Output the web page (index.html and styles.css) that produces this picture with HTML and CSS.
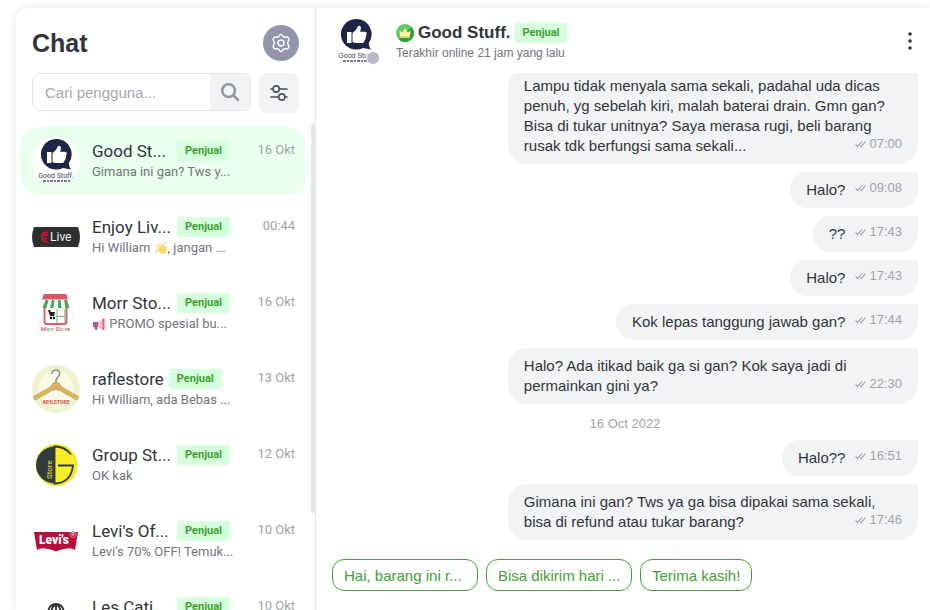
FILE: index.html
```
<!DOCTYPE html>
<html lang="id">
<head>
    <meta charset="UTF-8">
    <meta name="viewport" content="width=device-width, initial-scale=1.0">
    <title>Chat</title>
    <link rel="stylesheet" href="styles.css">
</head>
<body>
    <div class="app">
        <aside class="sidebar">
            <div class="sidebar-head">
                <h1>Chat</h1>
                <button class="settings-btn" type="button" aria-label="Pengaturan">
                    <svg width="20" height="20" viewBox="0 0 20 20" fill="none" stroke="#fff" stroke-width="1.4" stroke-linejoin="round">
                        <path d="M8.5 2.6 Q10 .2 11.5 2.6 Q12.4 4.4 14.3 4.2 Q17.2 3.6 17.9 5.9 Q18.3 7 17.2 8.2 Q16 10 17.2 11.8 Q18.5 13.2 17.6 14.6 Q16.6 16.4 14.3 15.8 Q12.4 15.6 11.5 17.4 Q10 19.8 8.5 17.4 Q7.6 15.6 5.7 15.8 Q3.4 16.4 2.4 14.6 Q1.5 13.2 2.8 11.8 Q4 10 2.8 8.2 Q1.5 6.8 2.4 5.4 Q3.4 3.6 5.7 4.2 Q7.6 4.4 8.5 2.6Z"/>
                        <circle cx="10" cy="10" r="3"/>
                    </svg>
                </button>
            </div>

            <form class="search-row">
                <div class="search-box">
                    <input type="text" placeholder="Cari pengguna..." aria-label="Cari pengguna">
                    <button class="search-btn" type="button" aria-label="Cari">
                        <svg width="20" height="20" viewBox="0 0 20 20" fill="none" stroke="#9299a3" stroke-width="2.6" stroke-linecap="round">
                            <circle cx="8.6" cy="8.6" r="6.4"/>
                            <path d="M13.5 13.5L18 18"/>
                        </svg>
                    </button>
                </div>
                <button class="filter-btn" type="button" aria-label="Filter">
                    <svg width="20" height="20" viewBox="0 0 20 20" fill="none" stroke="#4c535c" stroke-width="1.6" stroke-linecap="round">
                        <path d="M1.8 6H4M10.5 6H18M1.8 14H9.5M16 14H18"/>
                        <circle cx="7.2" cy="6" r="3.1"/>
                        <circle cx="12.8" cy="14" r="3.1"/>
                    </svg>
                </button>
            </form>

            <div class="list-wrap">
                <ul class="chat-list">
                    <li class="chat-item active">
                        <svg class="avatar" viewBox="0 0 48 48">
                            <circle cx="24" cy="24" r="24" fill="#fff"/>
                            <path d="M24 2a15.3 15.3 0 1 0 7 29l8 1.6q-2-2-2.2-6.6A15.3 15.3 0 0 0 24 2z" fill="#1e2547"/>
                            <path d="M15 15h4.5v11H15zM20.5 16q4-2.5 5.5-7 2.5-1 3 1.5l-.8 4.2h4.6q2 0 2 2-.2 1.5-1 2 .8 1.5-.4 2.7.3 1.5-1 2.4 0 2-1.8 2.2h-7q-2 0-3.1-1.2z" fill="#fff"/>
                            <text class="logo-name" x="24" y="41" text-anchor="middle" fill="#3d4260">Good Stuff.</text>
                            <path d="M11 44h27" stroke="#4a4f69" stroke-width="1.5" stroke-dasharray="3 1 2 1"/>
                        </svg>
                        <div class="chat-body">
                            <div class="chat-title"><span class="name cut">Good St...</span><span class="tag">Penjual</span></div>
                            <p>Gimana ini gan? Tws y...</p>
                        </div>
                        <time>16 Okt</time>
                    </li>
                    <li class="chat-item">
                        <svg class="avatar" viewBox="0 0 48 48">
                            <path d="M2 14h44q4 10 0 20H2q-4-10 0-20z" fill="#2e2f30"/>
                            <path d="M16 19.5q-6-1-6 4.5t6 4.5M16 22h-5M15 25.5h-4" fill="none" stroke="#c4152f" stroke-width="1.8"/>
                            <text class="logo-live" x="18" y="28" fill="#f0f0f0">Live</text>
                        </svg>
                        <div class="chat-body">
                            <div class="chat-title"><span class="name cut">Enjoy Liv...</span><span class="tag">Penjual</span></div>
                            <p>Hi William
                                <svg class="emoji" viewBox="0 0 14 14">
                                    <path d="M4.5 8L3 5q.5-1.2 1.5-.3l1.5 2L4.6 3.2q.8-1.3 1.7 0L8 6 7.2 2.2q1-1 1.7.3l1 3.8.9-2q1.5-.3 1.4 1.3l.4 4Q12.4 13 9 13q-2.5 0-4-2L2.6 8.500q.2-1.300 1.900-.5z" fill="#fcd667"/>
                                    <path d="M1.500 4.500l1-1.700M1.500 9.500l1.500 2.500M10 1.200l1.800 1" stroke="#9cbbe0" fill="none"/>
                                </svg>, jangan ...</p>
                        </div>
                        <time>00:44</time>
                    </li>
                    <li class="chat-item">
                        <svg class="avatar" viewBox="0 0 48 48">
                            <path d="M12.500 18v15q0 2 2 2h18q2 0 2-2V18" fill="#fffafa" stroke="#d9596a" stroke-width="1.8"/>
                            <path d="M13 5h20q2 0 2 2l1 5H10l1-5q0-2 2-2z" fill="#d9596a"/>
                            <path d="M10.500 10.500h25l2 7q-2 3-4.800 0-2.500 3-4.800 0-2.500 3-4.900 0-2.500 3-4.700 0-2.500 3-4.800 0-2.500 3-4.500 0z" fill="#fff"/>
                            <path d="M13.500 11h3l-2 8h-4zM20 11h2.500l-1 8H18zM26 11h2.500l1 8H26zM32 11h3l2.500 8h-4z" fill="#49a556"/>
                            <path d="M25 20v14M25 27.500h8M33 20v14" stroke="#6fb878" fill="none"/>
                            <path d="M16 21h2l1 2h4l-1 4h-4z" fill="#222"/><circle cx="19" cy="29" r="1.2"/><circle cx="22" cy="29" r="1.2"/>
                            <text class="logo-morr" x="9" y="42"><tspan fill="#df6675">M</tspan><tspan fill="#62a7d8">o</tspan><tspan fill="#edb94b">r</tspan><tspan fill="#65b876">r</tspan> <tspan fill="#df6675">S</tspan><tspan fill="#62a7d8">t</tspan><tspan fill="#edb94b">o</tspan><tspan fill="#65b876">r</tspan><tspan fill="#df6675">e</tspan></text>
                        </svg>
                        <div class="chat-body">
                            <div class="chat-title"><span class="name cut">Morr Sto...</span><span class="tag">Penjual</span></div>
                            <p><svg class="emoji" viewBox="0 0 14 14">
                                    <path d="M1 5h5v5H1z" fill="#b95491"/>
                                    <path d="M2.500 10H5l.5 2.500H3z" fill="#8c4b83"/>
                                    <path d="M6 5l5-3v11l-5-3z" fill="#f0bfcc"/>
                                    <path d="M10.500 1.500h2v11.500h-2z" fill="#ec6170"/>
                                </svg> PROMO spesial bu...</p>
                        </div>
                        <time>16 Okt</time>
                    </li>
                    <li class="chat-item">
                        <svg class="avatar" viewBox="0 0 48 48">
                            <circle cx="24" cy="24" r="24" fill="#f0f2d0"/>
                            <circle cx="24" cy="24" r="18" fill="#fafae7"/>
                            <path d="M20 9q0-4 4-4t3.500 4q0 2-2 3.500T24 18" fill="none" stroke="#83908b" stroke-width="1.5"/>
                            <path d="M21 18h6q1 3 5 5.500L46 31q1 2-1 4.200L29 26q-5-3-10 0L3 35.200Q1 33 2 31l14-7.500q4-2.500 5-5.500z" fill="#ddb35c" stroke="#b78b40" stroke-width=".6"/>
                            <text class="logo-rafle" x="24" y="39" text-anchor="middle" fill="#cf5145">AR'ILSTORE</text>
                        </svg>
                        <div class="chat-body">
                            <div class="chat-title"><span class="name">raflestore</span><span class="tag">Penjual</span></div>
                            <p>Hi William, ada Bebas ...</p>
                        </div>
                        <time>13 Okt</time>
                    </li>
                    <li class="chat-item">
                        <svg class="avatar" viewBox="0 0 48 48">
                            <circle cx="24.5" cy="24" r="21" fill="#ece92b"/>
                            <circle cx="24.5" cy="24" r="18.5" fill="#f9ee25"/>
                            <path d="M22.500 5.500a18.500 18.500 0 0 0 0 37z" fill="#333b3d"/>
                            <path d="M39 13.500Q33 5.500 22.500 5.500v37Q39 42 41 24.500H26" fill="none" stroke="#333b3d" stroke-width="1.9"/>
                            <text class="logo-group" transform="translate(20 38) rotate(-90)" fill="#e8e33c">Store</text>
                        </svg>
                        <div class="chat-body">
                            <div class="chat-title"><span class="name cut">Group St...</span><span class="tag">Penjual</span></div>
                            <p>OK kak</p>
                        </div>
                        <time>12 Okt</time>
                    </li>
                    <li class="chat-item">
                        <svg class="avatar" viewBox="0 0 48 48">
                            <path d="M2 15h44l-3 18q-4-2.500-8-1.500-6 .5-11 3-5-2.500-11-3-4-1-8 1.500z" fill="#b5103a"/>
                            <text class="logo-levis" x="22" y="27" text-anchor="middle" fill="#fff">Levi's</text>
                            <circle cx="41" cy="17.5" r="3" fill="#b5103a" stroke="#e8a9b8" stroke-width=".7"/>
                            <text class="logo-reg" x="41" y="19.3" text-anchor="middle" fill="#fff">R</text>
                        </svg>
                        <div class="chat-body">
                            <div class="chat-title"><span class="name cut">Levi's Of...</span><span class="tag">Penjual</span></div>
                            <p>Levi's 70% OFF! Temuk...</p>
                        </div>
                        <time>10 Okt</time>
                    </li>
                    <li class="chat-item">
                        <svg class="avatar" viewBox="0 0 48 48" fill="none" stroke="#333" stroke-width="1.8">
                            <path d="M16 20q1-9 8-9t8 9M20 20q-1-6 3-8M28 20q1-6-3-8M24 11v16"/>
                        </svg>
                        <div class="chat-body">
                            <div class="chat-title"><span class="name cut">Les Cati...</span><span class="tag">Penjual</span></div>
                        </div>
                        <time>10 Okt</time>
                    </li>
                </ul>
                <div class="scroll-thumb"></div>
            </div>
        </aside>

        <main class="room">
            <header class="room-head">
                <div class="room-avatar">
                    <svg class="avatar" viewBox="0 0 48 48">
                        <path d="M24 2a15.3 15.3 0 1 0 7 29l8 1.6q-2-2-2.2-6.6A15.3 15.3 0 0 0 24 2z" fill="#1e2547"/>
                        <path d="M15 15h4.5v11H15zM20.5 16q4-2.5 5.5-7 2.5-1 3 1.5l-.8 4.2h4.6q2 0 2 2-.2 1.5-1 2 .8 1.5-.4 2.7.3 1.5-1 2.4 0 2-1.8 2.2h-7q-2 0-3.1-1.2z" fill="#fff"/>
                        <text class="logo-name" x="24" y="41" text-anchor="middle" fill="#3d4260">Good Stuff.</text>
                        <path d="M11 44h27" stroke="#4a4f69" stroke-width="1.5" stroke-dasharray="3 1 2 1"/>
                    </svg>
                    <span class="status"></span>
                </div>
                <div class="room-info">
                    <div class="room-title">
                        <svg width="18" height="18" viewBox="0 0 18 18">
                            <circle cx="9" cy="9" r="9" fill="#5fc95b"/>
                            <path d="M18 9a9 9 0 0 1-15 6.7L15.5 3A9 9 0 0 1 18 9z" fill="#27a03c"/>
                            <path d="M3.2 6.5l3 2L9 4l2.8 4.5 3-2-1.3 7h-9z" fill="#fff2a6"/>
                            <path d="M4.3 12h9.4l-.3 1.7H4.6z" fill="#f2d667"/>
                        </svg>
                        <h2>Good Stuff.</h2>
                        <span class="tag">Penjual</span>
                    </div>
                    <p>Terakhir online 21 jam yang lalu</p>
                </div>
                <button class="more-btn" type="button" aria-label="Menu">
                    <svg width="4" height="20" viewBox="0 0 4 20" fill="#31353b">
                        <circle cx="2" cy="3" r="1.8"/><circle cx="2" cy="10" r="1.8"/><circle cx="2" cy="17" r="1.8"/>
                    </svg>
                </button>
            </header>

            <div class="messages" id="messages"></div>

            <div class="quick-replies">
                <button type="button" class="cut-reply">Hai, barang ini r...</button>
                <button type="button" class="cut-reply">Bisa dikirim hari ...</button>
                <button type="button">Terima kasih!</button>
            </div>
        </main>
    </div>

    <script>
        const messages = [
            { text: 'Lampu tidak menyala sama sekali, padahal uda dicas penuh, yg sebelah kiri, malah baterai drain. Gmn gan? Bisa di tukar unitnya? Saya merasa rugi, beli barang rusak tdk berfungsi sama sekali...', time: '07:00' },
            { text: 'Halo?', time: '09:08' },
            { text: '??', time: '17:43' },
            { text: 'Halo?', time: '17:43' },
            { text: 'Kok lepas tanggung jawab gan?', time: '17:44' },
            { text: 'Halo? Ada itikad baik ga si gan? Kok saya jadi di permainkan gini ya?', time: '22:30' },
            { date: '16 Oct 2022' },
            { text: 'Halo??', time: '16:51' },
            { text: 'Gimana ini gan? Tws ya ga bisa dipakai sama sekali, bisa di refund atau tukar barang?', time: '17:46' }
        ];

        const checks = `
            <svg width="11" height="8" viewBox="0 0 11 8" fill="none" stroke="#9299a3" stroke-width="1.1">
                <path d="M.6 4.3L2.6 6.500 7 1.500M5.200 5.600L6.200 6.500 10.500 1.500"/>
            </svg>`;

        document.getElementById('messages').innerHTML = messages.map(m => m.date
            ? `<div class="day">${m.date}</div>`
            : `<div class="bubble">${m.text}<span class="meta">${checks}${m.time}</span></div>`
        ).join('');
    </script>
</body>
</html>
```

FILE: styles.css
```
* {
    box-sizing: border-box;
}
body {
    font-family: "Liberation Sans", Arial, sans-serif;
    margin: 0;
    padding: 8px 0 0 16px;
    height: 100vh;
    overflow: hidden;
    background: #fff;
    color: #31353b;
}
h1, h2, p, ul {
    margin: 0;
    padding: 0;
}
button {
    font-family: inherit;
    padding: 0;
    border: none;
    cursor: pointer;
}
.app {
    display: flex;
    height: 100%;
    border-radius: 12px 0 0 0;
    box-shadow: 0 0 8px rgba(49, 53, 59, 0.12);
}

/* Sidebar */
.sidebar {
    display: flex;
    flex-direction: column;
    flex: 0 0 300px;
    min-width: 0;
    border-right: 1px solid #e5e7e9;
}
.sidebar-head {
    display: flex;
    align-items: center;
    justify-content: space-between;
    padding: 17px 16px 12px;
}
h1 {
    font-size: 25px;
    line-height: 36px;
}
.settings-btn {
    display: flex;
    align-items: center;
    justify-content: center;
    width: 36px;
    height: 36px;
    border-radius: 50%;
    background: #9196ab;
}
.search-row {
    display: flex;
    align-items: flex-start;
    gap: 8px;
    padding: 0 16px;
}
.search-box {
    display: flex;
    flex: 1;
    min-width: 0;
    height: 38px;
    border: 1px solid #e2e4e7;
    border-radius: 8px;
    overflow: hidden;
}
.search-box input {
    flex: 1;
    min-width: 0;
    padding: 0 12px;
    border: none;
    outline: none;
    font-family: inherit;
    font-size: 15px;
    color: #31353b;
}
.search-box input::placeholder {
    color: #a3a7ad;
}
.search-btn {
    display: flex;
    align-items: center;
    justify-content: center;
    width: 40px;
    background: #f2f3f5;
}
.filter-btn {
    display: flex;
    align-items: center;
    justify-content: center;
    width: 40px;
    height: 40px;
    border-radius: 8px;
    background: #f2f3f5;
}
.list-wrap {
    position: relative;
    flex: 1;
    min-height: 0;
    margin-top: 10px;
    overflow: hidden;
}
.chat-list {
    display: flex;
    flex-direction: column;
    gap: 8px;
    padding: 4px 8px 4px 4px;
    font-family: Roboto, sans-serif;
    list-style: none;
}
.chat-item {
    display: flex;
    gap: 12px;
    padding: 10px 12px;
    border-radius: 20px;
}
.chat-item.active {
    background: #ebffef;
}
.avatar {
    display: block;
    flex: none;
    width: 48px;
    height: 48px;
}
.chat-body {
    flex: 1;
    min-width: 0;
    padding-top: 3px;
}
.chat-title {
    display: flex;
    align-items: center;
    gap: 5px;
    height: 22px;
}
.name {
    font-size: 17px;
    line-height: 22px;
    white-space: nowrap;
}
.name.cut {
    width: 80px;
}
.tag {
    padding: 0 8px;
    border-radius: 3px;
    background: #d6ffde;
    color: #3ea02f;
    font-family: Roboto, sans-serif;
    font-size: 11px;
    font-weight: bold;
    line-height: 20px;
}
.chat-body p {
    font-size: 13px;
    line-height: 20px;
    color: #70757c;
    white-space: nowrap;
}
.emoji {
    width: 14px;
    height: 14px;
    vertical-align: -3px;
}
.chat-item time {
    padding-top: 3px;
    font-size: 13px;
    line-height: 20px;
    color: #9fa3a9;
}
.scroll-thumb {
    position: absolute;
    top: 0;
    right: 0;
    width: 4px;
    height: 80%;
    border-radius: 2px;
    background: #e5e7e9;
}

/* Logo lettering */
.logo-name {
    font-size: 7px;
}
.logo-live {
    font-size: 12px;
}
.logo-morr {
    font-size: 6px;
    font-weight: bold;
}
.logo-rafle {
    font-size: 5px;
    font-weight: bold;
}
.logo-group {
    font-size: 8px;
}
.logo-levis {
    font-size: 12px;
    font-weight: 900;
}
.logo-reg {
    font-size: 5px;
}

/* Chat room */
.room {
    display: flex;
    flex-direction: column;
    flex: 1;
    min-width: 0;
}
.room-head {
    display: flex;
    align-items: center;
    gap: 16px;
    height: 65px;
    padding: 0 12px 0 16px;
}
.room-avatar {
    position: relative;
}
.status {
    position: absolute;
    right: 0;
    bottom: 0;
    width: 14px;
    height: 14px;
    border: 1px solid #fff;
    border-radius: 50%;
    background: #b5bac6;
}
.room-info {
    flex: 1;
    padding-top: 5px;
}
.room-info p {
    font-size: 12px;
    line-height: 20px;
    color: #70757c;
}
.room-title {
    display: flex;
    align-items: center;
    gap: 4px;
}
h2 {
    font-size: 17px;
    line-height: 20px;
}
.more-btn {
    display: flex;
    align-items: center;
    justify-content: center;
    width: 16px;
    height: 24px;
    background: none;
}
.messages {
    display: flex;
    flex-direction: column;
    align-items: flex-end;
    justify-content: flex-end;
    gap: 8px;
    flex: 1;
    min-height: 0;
    padding: 0 12px 0 16px;
    overflow: hidden;
}
.bubble {
    flex: none;
    max-width: 70%;
    padding: 8px 16px;
    border-radius: 20px 0 20px 20px;
    background: #f2f3f5;
    font-size: 15px;
    line-height: 20px;
}
.meta {
    float: right;
    display: flex;
    align-items: center;
    gap: 3px;
    margin-left: 10px;
    font-size: 13px;
    line-height: 16px;
    color: #9fa3a9;
}
.day {
    flex: none;
    align-self: center;
    padding-top: 4px;
    font-size: 13px;
    line-height: 16px;
    color: #9fa3a9;
}
.quick-replies {
    display: flex;
    gap: 8px;
    padding: 19px 16px;
}
.quick-replies button {
    height: 32px;
    padding: 0 11px;
    border: 1px solid #42a037;
    border-radius: 12px;
    background: #fff;
    color: #42a037;
    font-size: 15px;
    text-align: left;
    white-space: nowrap;
}
.quick-replies .cut-reply {
    width: 146px;
}
```
